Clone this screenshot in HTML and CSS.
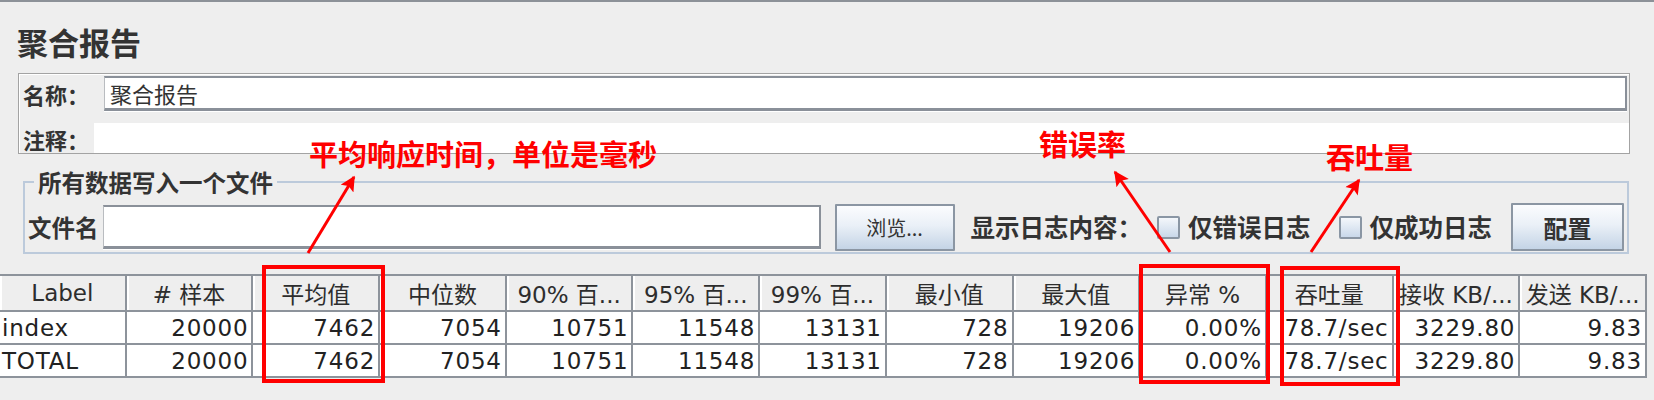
FILE: index.html
```html
<!DOCTYPE html>
<html lang="zh-CN">
<head>
<meta charset="utf-8">
<title>聚合报告</title>
<link rel="stylesheet" href="styles.css">
</head>
<body>
<div class="topline"></div>
<main class="panel">
  <h1 class="title">聚合报告</h1>

  <section class="namebox">
    <div class="name-row">
      <span class="lbl lbl-name">名称：</span>
      <div class="textfield name-field">聚合报告</div>
    </div>
    <div class="comment-row">
      <span class="lbl lbl-comment">注释：</span>
      <div class="comment-field"></div>
    </div>
  </section>

  <fieldset class="filebox">
    <legend class="legend">所有数据写入一个文件</legend>
    <div class="file-row">
      <span class="flbl">文件名</span>
      <div class="textfield file-field"></div>
      <button class="btn btn-browse">浏览...</button>
      <span class="flbl wide log-lbl">显示日志内容：</span>
      <span class="checkbox"></span>
      <span class="flbl wide cb-lbl-1">仅错误日志</span>
      <span class="checkbox"></span>
      <span class="flbl wide cb-lbl-2">仅成功日志</span>
      <button class="btn btn-config">配置</button>
    </div>
  </fieldset>

  <table class="grid">
    <thead>
      <tr>
        <th>Label</th><th># 样本</th><th>平均值</th><th>中位数</th><th>90% 百...</th><th>95% 百...</th><th>99% 百...</th><th>最小值</th><th>最大值</th><th>异常 %</th><th>吞吐量</th><th>接收 KB/...</th><th>发送 KB/...</th>
      </tr>
    </thead>
    <tbody>
      <tr>
        <td class="lab">index</td><td>20000</td><td>7462</td><td>7054</td><td>10751</td><td>11548</td><td>13131</td><td>728</td><td>19206</td><td>0.00%</td><td>78.7/sec</td><td>3229.80</td><td>9.83</td>
      </tr>
      <tr>
        <td class="lab">TOTAL</td><td>20000</td><td>7462</td><td>7054</td><td>10751</td><td>11548</td><td>13131</td><td>728</td><td>19206</td><td>0.00%</td><td>78.7/sec</td><td>3229.80</td><td>9.83</td>
      </tr>
    </tbody>
  </table>
</main>

<div class="overlay">
  <svg class="marks" width="1654" height="400" viewBox="0 0 1654 400" xmlns="http://www.w3.org/2000/svg">
    <defs>
      <marker id="ah" viewBox="0 0 10 10" refX="9" refY="5" markerWidth="5.5" markerHeight="5" orient="auto" markerUnits="strokeWidth">
        <path d="M0 0 L10 5 L0 10 L2 5 Z" fill="#ff0000"/>
      </marker>
    </defs>
    <rect x="264" y="267" width="119" height="114" fill="none" stroke="#ff0000" stroke-width="4"/>
    <rect x="1141" y="266" width="127" height="116" fill="none" stroke="#ff0000" stroke-width="4"/>
    <rect x="1282" y="268" width="116" height="116" fill="none" stroke="#ff0000" stroke-width="4"/>
    <line x1="308" y1="253" x2="354" y2="177" stroke="#ff0000" stroke-width="3" marker-end="url(#ah)"/>
    <line x1="1170" y1="252" x2="1115" y2="172" stroke="#ff0000" stroke-width="3" marker-end="url(#ah)"/>
    <line x1="1311" y1="252" x2="1359" y2="180" stroke="#ff0000" stroke-width="3" marker-end="url(#ah)"/>
  </svg>
  <span class="note note-avg">平均响应时间，单位是毫秒</span>
  <span class="note note-err">错误率</span>
  <span class="note note-tps">吞吐量</span>
</div>
</body>
</html>
```

FILE: styles.css
```css
* { box-sizing: border-box; }

html, body {
  margin: 0;
  padding: 0;
}

body {
  position: relative;
  width: 1654px;
  height: 400px;
  overflow: hidden;
  background: #eeeeee;
  color: #333333;
  font-family: "DejaVu Sans", "Noto Sans CJK SC", sans-serif;
}

.topline {
  height: 2px;
  background: #8c9198;
}

.panel {
  display: flex;
  flex-direction: column;
}

.title {
  margin: 0;
  padding: 22px 0 0 17px;
  font-family: "Noto Sans CJK SC", sans-serif;
  font-size: 31px;
  line-height: 36px;
  font-weight: 700;
  color: #333333;
}

/* name / comment box */
.namebox {
  margin: 13px 0 0 18px;
  width: 1612px;
  height: 81px;
  border: 1px solid #a3a3a3;
  box-shadow: inset 1px 1px 0 #ffffff;
  display: flex;
  flex-direction: column;
}

.lbl {
  font-family: "Noto Sans CJK SC", sans-serif;
  font-size: 22px;
  font-weight: 700;
  color: #333333;
  padding-left: 4px;
  line-height: 30px;
}

.name-row {
  display: flex;
  align-items: center;
  height: 35px;
  margin-top: 2px;
}

.lbl-name { width: 85px; }

.textfield {
  background: #ffffff;
  border-top: 2px solid #8a9099;
  border-left: 1px solid #b9bcc0;
  border-right: 2px solid #8a9099;
  border-bottom: 3px solid #8a9099;
  box-shadow: 0 1px 0 #ffffff;
}

.name-field {
  width: 1523px;
  height: 35px;
  padding-left: 5px;
  font-family: "Noto Sans CJK SC", sans-serif;
  font-size: 22px;
  line-height: 30px;
  color: #333333;
}

.comment-row {
  display: flex;
  align-items: stretch;
  height: 30px;
  margin-top: 12px;
}

.lbl-comment {
  width: 75px;
  display: flex;
  align-items: flex-end;
  line-height: 28px;
}

.comment-field {
  flex: 1;
  background: #ffffff;
}

/* file section */
.filebox {
  margin: 14px 0 0 23px;
  width: 1606px;
  min-width: 0;
  padding: 7px 0 0 3px;
  height: 86px;
  border: 2px solid #bccadb;
}

.legend {
  margin-left: 6px;
  padding: 0 4px;
  font-family: "Noto Sans CJK SC", sans-serif;
  font-size: 23.5px;
  line-height: 28px;
  font-weight: 700;
  color: #333333;
}

.file-row {
  display: flex;
  align-items: center;
  height: 48px;
}

.flbl {
  font-family: "Noto Sans CJK SC", sans-serif;
  font-size: 23.5px;
  font-weight: 700;
  line-height: 30px;
  color: #333333;
  white-space: nowrap;
}

.flbl.wide { font-size: 24.5px; }

.file-field {
  width: 718px;
  height: 44px;
  margin-left: 4px;
  margin-right: 14px;
}

.btn {
  font-family: "Noto Sans CJK SC", sans-serif;
  color: #333333;
  border: 2px solid #8b96a3;
  border-radius: 1px;
  background: linear-gradient(#fbfcfe 0%, #eaf0f7 45%, #c4d4e6 100%);
  padding: 0;
}

.btn-browse {
  width: 120px;
  height: 47px;
  font-size: 20px;
  font-weight: 400;
  margin-right: 16px;
}

.log-lbl { margin-right: 15px; }

.checkbox {
  width: 23px;
  height: 23px;
  border: 2px solid #8a96a4;
  border-radius: 2px;
  background: linear-gradient(#f4f7fb, #c9d8ea);
  margin-right: 8px;
}

.cb-lbl-1 { margin-right: 28px; }
.cb-lbl-2 { margin-right: 19px; }

.btn-config {
  width: 113px;
  height: 48px;
  font-size: 24px;
  font-weight: 700;
}

/* table */
.grid {
  margin-top: 20px;
  width: 1647px;
  table-layout: fixed;
  border-collapse: separate;
  border-spacing: 0;
  border-top: 2px solid #8d939b;
  font-size: 23px;
}

.grid th {
  height: 36px;
  padding: 0 2px;
  background: #eeeeee;
  font-weight: 400;
  color: #2d2d2d;
  text-align: center;
  white-space: nowrap;
  overflow: hidden;
  border-right: 2px solid #8d939b;
  border-bottom: 2px solid #8d939b;
  box-shadow: inset 2px 0 0 #ffffff;
}

.grid td {
  height: 33px;
  padding: 0 3px 0 2px;
  background: #ffffff;
  color: #222222;
  text-align: right;
  letter-spacing: 0.8px;
  white-space: nowrap;
  overflow: hidden;
  border-right: 2px solid #8d939b;
  border-bottom: 2px solid #8d939b;
}

.grid td.lab { text-align: left; }

/* annotations */
.overlay {
  position: absolute;
  left: 0;
  top: 0;
  width: 1654px;
  height: 400px;
  pointer-events: none;
}

.marks {
  position: absolute;
  left: 0;
  top: 0;
}

.note {
  position: absolute;
  font-family: "Noto Sans CJK SC", sans-serif;
  font-weight: 700;
  font-size: 29px;
  line-height: 29px;
  color: #ff0000;
  white-space: nowrap;
}

.note-avg { left: 309px; top: 139px; }
.note-err { left: 1039px; top: 129px; }
.note-tps { left: 1326px; top: 142px; }
```
